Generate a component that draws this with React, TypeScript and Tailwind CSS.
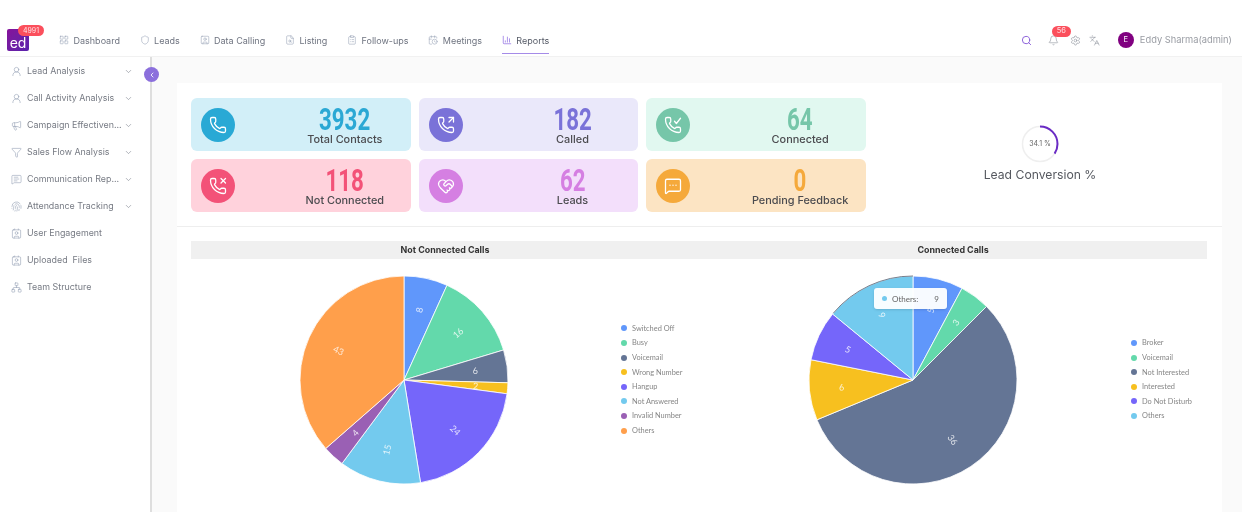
import React from "react";
import {
  LayoutGrid, Shield, SquareUser, FileSearch, ClipboardList, CalendarClock, ChartColumn,
  Search, Bell, Settings, Languages, ChevronDown, ChevronLeft, UserRound, Megaphone, Filter,
  MessageSquareText, Fingerprint, Contact, Network, Phone, PhoneOutgoing, PhoneMissed,
  HeartHandshake, MessageSquareMore,
} from "lucide-react";

const nav = [
  { label: "Dashboard", Icon: LayoutGrid },
  { label: "Leads", Icon: Shield },
  { label: "Data Calling", Icon: SquareUser },
  { label: "Listing", Icon: FileSearch },
  { label: "Follow-ups", Icon: ClipboardList },
  { label: "Meetings", Icon: CalendarClock },
];

const side = [
  { label: "Lead Analysis", Icon: UserRound, more: true },
  { label: "Call Activity Analysis", Icon: UserRound, more: true },
  { label: "Campaign Effectiven...", Icon: Megaphone, more: true },
  { label: "Sales Flow Analysis", Icon: Filter, more: true },
  { label: "Communication Rep...", Icon: MessageSquareText, more: true },
  { label: "Attendance Tracking", Icon: Fingerprint, more: true },
  { label: "User Engagement", Icon: Contact, more: false },
  { label: "Uploaded  Files", Icon: Contact, more: false },
  { label: "Team Structure", Icon: Network, more: false },
];

function PhoneCheck({ size, strokeWidth }: { size: number; strokeWidth: number }) {
  return (
    <svg width={size} height={size} viewBox="0 0 24 24" fill="none" stroke="currentColor" strokeWidth={strokeWidth} strokeLinecap="round" strokeLinejoin="round">
      <path d="M13.832 16.568a1 1 0 0 0 1.213-.303l.355-.465A2 2 0 0 1 17 15h3a2 2 0 0 1 2 2v3a2 2 0 0 1-2 2A18 18 0 0 1 2 4a2 2 0 0 1 2-2h3a2 2 0 0 1 2 2v3a2 2 0 0 1-.8 1.6l-.468.351a1 1 0 0 0-.292 1.233 14 14 0 0 0 6.392 6.384" />
      <path d="M14 7l2.5 3L22 3" />
    </svg>
  );
}

const stats = [
  { n: "3932", label: "Total Contacts", Icon: Phone, bg: "bg-[#d2eff8]", dot: "bg-[#29a9d5]", fg: "text-[#2ba8d4]" },
  { n: "182", label: "Called", Icon: PhoneOutgoing, bg: "bg-[#eae8fa]", dot: "bg-[#7a72d8]", fg: "text-[#7a72d8]" },
  { n: "64", label: "Connected", Icon: PhoneCheck, bg: "bg-[#e1f8f0]", dot: "bg-[#76c6a9]", fg: "text-[#76c6a9]" },
  { n: "118", label: "Not Connected", Icon: PhoneMissed, bg: "bg-[#ffd2dc]", dot: "bg-[#f35278]", fg: "text-[#f35278]" },
  { n: "62", label: "Leads", Icon: HeartHandshake, bg: "bg-[#f3dffb]", dot: "bg-[#d57fe2]", fg: "text-[#d57fe2]" },
  { n: "0", label: "Pending Feedback", Icon: MessageSquareMore, bg: "bg-[#fce4c3]", dot: "bg-[#f5a93b]", fg: "text-[#f5a93b]" },
];

const C = { blue: "#6097fb", green: "#63d9ab", slate: "#647595", yellow: "#f7c01f", purple: "#7566fa", sky: "#73caee", violet: "#9a60b4", orange: "#ff9f4b" };

type Slice = { name: string; v: number; c: string };
const pie1: Slice[] = [
  { name: "Switched Off", v: 8, c: C.blue },
  { name: "Busy", v: 16, c: C.green },
  { name: "Voicemail", v: 6, c: C.slate },
  { name: "Wrong Number", v: 2, c: C.yellow },
  { name: "Hangup", v: 24, c: C.purple },
  { name: "Not Answered", v: 15, c: C.sky },
  { name: "Invalid Number", v: 4, c: C.violet },
  { name: "Others", v: 43, c: C.orange },
];
const pie2: Slice[] = [
  { name: "Broker", v: 5, c: C.blue },
  { name: "Voicemail", v: 3, c: C.green },
  { name: "Not Interested", v: 36, c: C.slate },
  { name: "Interested", v: 6, c: C.yellow },
  { name: "Do Not Disturb", v: 5, c: C.purple },
  { name: "Others", v: 9, c: C.sky },
];

const R = 104;
const O = 106;
function pt(deg: number, r: number) {
  const a = (deg * Math.PI) / 180;
  return [O + r * Math.sin(a), O - r * Math.cos(a)];
}

function Pie({ data, hoverArc }: { data: Slice[]; hoverArc?: boolean }) {
  const total = data.reduce((s, d) => s + d.v, 0);
  let acc = 0;
  return (
    <svg width={212} height={212} viewBox="0 0 212 212" className="shrink-0">
      {data.map((d) => {
        const a0 = (acc / total) * 360;
        acc += d.v;
        const a1 = (acc / total) * 360;
        const [x0, y0] = pt(a0, R);
        const [x1, y1] = pt(a1, R);
        return (
          <path
            key={d.name}
            d={`M${O} ${O}L${x0} ${y0}A${R} ${R} 0 ${a1 - a0 > 180 ? 1 : 0} 1 ${x1} ${y1}Z`}
            fill={d.c}
            stroke="#ffffff"
            strokeWidth={0.8}
          />
        );
      })}
      {hoverArc && (() => {
        const [x0, y0] = pt(310, R);
        const [x1, y1] = pt(360, R);
        return <path d={`M${x0} ${y0}A${R} ${R} 0 0 1 ${x1} ${y1}`} fill="none" stroke="#5a6070" strokeWidth={0.8} />;
      })()}
      {(() => {
        let c = 0;
        return data.map((d) => {
          const mid = ((c + d.v / 2) / total) * 360;
          c += d.v;
          const [x, y] = pt(mid, R * 0.69);
          const rot = mid < 180 ? mid - 90 : mid - 270;
          return (
            <text
              key={d.name}
              x={x}
              y={y}
              transform={`rotate(${rot} ${x} ${y})`}
              textAnchor="middle"
              dominantBaseline="central"
              fill="#ffffff"
              fillOpacity={0.8}
              fontSize={9}
              fontFamily="Lato, sans-serif"
            >
              {d.v}
            </text>
          );
        });
      })()}
    </svg>
  );
}

function Legend({ data, ml }: { data: Slice[]; ml: string }) {
  return (
    <ul className={`flex flex-col pb-[1px] ${ml}`}>
      {data.map((d) => (
        <li key={d.name} className="flex h-[14.6px] items-center gap-[5px] text-[7.4px] text-[#868686] font-['Lato',sans-serif]">
          <span className="h-[6px] w-[6px] rounded-full" style={{ backgroundColor: d.c }} />
          {d.name}
        </li>
      ))}
    </ul>
  );
}

export default function App() {
  return (
    <div className="h-[512px] w-[1242px] overflow-hidden bg-white font-['Inter',sans-serif] blur-[0.5px]">
      <header className="flex h-[57px] items-start border-b border-[#f1f1f1] pt-[25px]">
        <div className="relative ml-[7px] mt-[4px] flex h-[22px] w-[22px] items-end justify-center rounded-[2px] bg-gradient-to-br from-[#86109a] to-[#5a22ad] pb-[3px] text-[14px] font-normal leading-[11px] text-white">
          ed
          <span className="absolute left-[11px] top-[-4px] flex h-[11px] w-[26px] items-center justify-center rounded-full bg-[#fb4f5c] text-[7px] font-normal leading-none text-[#ffe3e5]">4991</span>
        </div>
        <nav className="ml-[30px] flex h-[29px] gap-[19.7px]">
          {nav.map(({ label, Icon }) => (
            <div key={label} className="flex h-[28.5px] items-center gap-[4.5px] border-b-[1.5px] border-transparent pt-[3px] text-[9px] text-[#6f7480]">
              <Icon size={10} strokeWidth={1.2} className="text-[#8b97ad]" />
              {label}
            </div>
          ))}
          <div className="flex h-[28.5px] items-center gap-[4.5px] border-b-[1.5px] border-[#a58be8] pt-[3px] text-[9px] text-[#555a66]">
            <ChartColumn size={10} strokeWidth={1.5} className="text-[#7b55dd]" />
            Reports
          </div>
        </nav>
        <div className="ml-auto mr-[10px] flex h-[29px] items-center pt-[1px]">
          <Search size={11} strokeWidth={2} className="text-[#8457d6]" />
          <div className="relative ml-[16px]">
            <Bell size={11} strokeWidth={1.3} className="text-[#8a8f99]" />
            <span className="absolute left-[4px] top-[-9px] flex h-[11px] w-[19px] items-center justify-center rounded-full bg-[#fb4f5c] text-[7.5px] leading-none text-[#ffe3e5]">56</span>
          </div>
          <Settings size={11} strokeWidth={1.3} className="ml-[11px] text-[#8a8f99]" />
          <Languages size={11} strokeWidth={1.3} className="ml-[8px] text-[#8a8f99]" />
          <span className="ml-[18px] flex h-[16px] w-[16px] items-center justify-center rounded-full bg-[#800080] text-[7.5px] text-white">E</span>
          <span className="ml-[6px] text-[9.3px] text-[#999ca3]">Eddy Sharma(admin)</span>
        </div>
      </header>
      <div className="relative flex h-[455px]">
        <aside className="w-[152px] shrink-0 border-r-2 border-[#dedede] pl-[11px] pr-[17px] pt-[1px]">
          {side.map(({ label, Icon, more }) => (
            <div key={label} className="flex h-[27px] items-center pb-[1px] text-[8.9px] text-[#777b84]">
              <Icon size={11} strokeWidth={1.3} className="mr-[5px] shrink-0 text-[#94a0b4]" />
              <span className="flex-1 whitespace-pre">{label}</span>
              {more && <ChevronDown size={9} strokeWidth={1.6} className="text-[#7f8591]" />}
            </div>
          ))}
        </aside>
        <span className="absolute left-[144px] top-[10px] flex h-[15px] w-[15px] items-center justify-center rounded-full bg-[#8b6fdc] text-white">
          <ChevronLeft size={8} strokeWidth={2.5} />
        </span>
        <main className="flex-1 bg-[#fafafa] pl-[25px] pr-[20px] pt-[26px]">
          <section className="h-full bg-white px-[14px] pt-[15px]">
            <div className="mx-[-14px] flex h-[129px] border-b border-[#eeeeee] px-[14px]">
              <div className="grid h-[114px] w-[675px] shrink-0 grid-cols-3 gap-[8px]">
                {stats.map(({ n, label, Icon, bg, dot, fg }) => (
                  <div key={label} className={`flex h-[53px] items-center rounded-[6px] pl-[10px] ${bg}`}>
                    <span className={`flex h-[34px] w-[34px] shrink-0 items-center justify-center rounded-full text-white ${dot}`}>
                      <Icon size={18} strokeWidth={1.7} />
                    </span>
                    <div className="ml-[44px] flex flex-1 flex-col items-center pb-[2px]">
                      <span className={`inline-block scale-x-[0.72] pt-[4px] font-['Roboto',sans-serif] text-[31px] font-bold leading-[27px] ${fg}`}>{n}</span>
                      <span className="text-[10.9px] font-medium leading-[12px] text-[#4b4b4f]">{label}</span>
                    </div>
                  </div>
                ))}
              </div>
              <div className="flex h-[114px] flex-1 flex-col items-center justify-center gap-[4px] pb-[2px] pl-[6px]">
                <div className="relative h-[38px] w-[38px]">
                  <svg width={38} height={38} viewBox="0 0 38 38">
                    <circle cx={19} cy={19} r={17.5} fill="none" stroke="#efefef" strokeWidth={1.5} />
                    <circle
                      cx={19}
                      cy={19}
                      r={17.5}
                      fill="none"
                      stroke="#6a2bc4"
                      strokeWidth={2}
                      strokeDasharray={`${2 * Math.PI * 17.5 * 0.341} 200`}
                      transform="rotate(-90 19 19)"
                    />
                  </svg>
                  <span className="absolute inset-0 flex items-center justify-center text-[7px] text-[#666]">34.1 %</span>
                </div>
                <span className="text-[12.2px] leading-[16px] text-[#55585f]">Lead Conversion %</span>
              </div>
            </div>
            <div className="mt-[14px] grid w-[1016px] grid-cols-2 bg-[#f0f0f0]">
              <h3 className="h-[18px] text-center text-[8.9px] font-bold leading-[18px] text-[#333]">Not Connected Calls</h3>
              <h3 className="h-[18px] text-center text-[8.9px] font-bold leading-[18px] text-[#333]">Connected Calls</h3>
            </div>
            <div className="mt-[15px] grid w-[1016px] grid-cols-2">
              <div className="flex items-center pl-[107px]">
                <Pie data={pie1} />
                <Legend data={pie1} ml="ml-[111px]" />
              </div>
              <div className="relative flex items-center pl-[108px]">
                <Pie data={pie2} hoverArc />
                <Legend data={pie2} ml="ml-[112px]" />
                <div className="absolute left-[175px] top-[14px] flex h-[21px] w-[73px] items-center rounded-[3px] bg-white/95 pl-[8px] pr-[8px] text-[8px] text-[#666] shadow-sm font-['Lato',sans-serif]">
                  <span className="mr-[5px] h-[5px] w-[5px] rounded-full bg-[#73caee]" />
                  Others:
                  <span className="ml-auto">9</span>
                </div>
              </div>
            </div>
          </section>
        </main>
      </div>
    </div>
  );
}
